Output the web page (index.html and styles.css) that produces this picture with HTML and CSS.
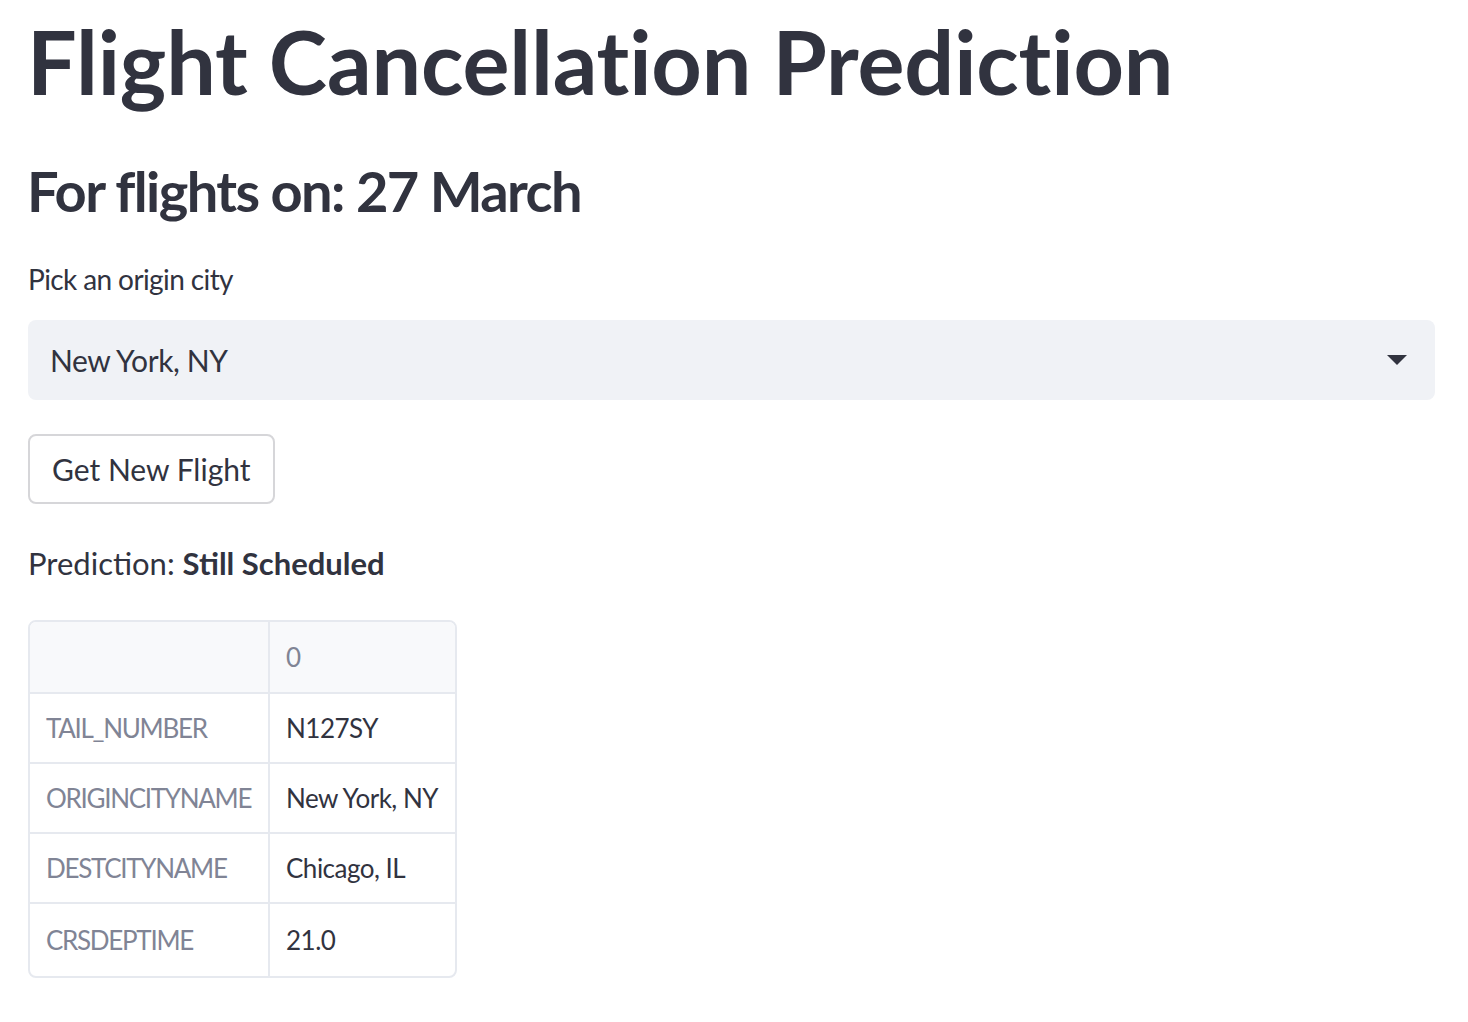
FILE: index.html
```html
<!DOCTYPE html>
<html>
<head>
<meta charset="utf-8">
<link rel="stylesheet" href="styles.css">
</head>
<body>
<main class="app">
  <h1 class="title">Flight Cancellation Prediction</h1>
  <h2 class="subtitle">For flights on: 27 March</h2>
  <label class="field-label">Pick an origin city</label>
  <div class="select">
    <span class="select-value">New York, NY</span>
    <svg class="select-arrow" width="20" height="10" viewBox="0 0 20 10"><path d="M0 0 H20 L10 10 Z" fill="#31333f"/></svg>
  </div>
  <div class="btn-row"><button class="btn">Get New Flight</button></div>
  <p class="prediction">Prediction: <strong>Still Scheduled</strong></p>
  <table class="df">
    <thead>
      <tr><th class="corner"></th><th class="colhead">0</th></tr>
    </thead>
    <tbody>
      <tr><th>TAIL_NUMBER</th><td>N127SY</td></tr>
      <tr><th>ORIGINCITYNAME</th><td>New York, NY</td></tr>
      <tr><th>DESTCITYNAME</th><td>Chicago, IL</td></tr>
      <tr><th>CRSDEPTIME</th><td>21.0</td></tr>
    </tbody>
  </table>
</main>
</body>
</html>
```
FILE: styles.css
```css
html, body {
  margin: 0;
  padding: 0;
  background: #ffffff;
}
body {
  font-family: "Lato", "Open Sans", sans-serif;
  color: #31333f;
}
.app {
  padding: 0 33px 0 28px;
  display: flex;
  flex-direction: column;
  align-items: flex-start;
}
.title {
  margin: 9px 0 0 -1px;
  font-size: 88px;
  font-weight: 700;
  line-height: 1.2;
  letter-spacing: -0.15px;
}
.subtitle {
  margin: 42px 0 0 -1px;
  font-size: 56px;
  font-weight: 700;
  line-height: 1.2;
  letter-spacing: -1.6px;
}
.field-label {
  margin-top: 36px;
  font-size: 28px;
  line-height: 1.4;
  letter-spacing: -0.6px;
}
.select {
  margin-top: 21px;
  align-self: stretch;
  height: 80px;
  background: #f0f2f6;
  border-radius: 8px;
  display: flex;
  align-items: center;
  justify-content: space-between;
  padding: 0 28px 0 22px;
  box-sizing: border-box;
}
.select-value {
  font-size: 30px;
  letter-spacing: -0.4px;
}
.select-arrow {
  display: block;
}
.btn-row {
  margin-top: 34px;
}
.btn {
  font-family: inherit;
  color: #31333f;
  font-size: 30px;
  height: 70px;
  padding: 0 22px;
  background: #ffffff;
  border: 2px solid #d6d6d9;
  border-radius: 8px;
}
.prediction {
  margin: 38px 0 0 0;
  font-size: 31px;
  line-height: 1.4;
}
.prediction strong {
  font-weight: 700;
}
.df {
  margin-top: 35px;
  width: 429px;
  table-layout: fixed;
  border-collapse: separate;
  border-spacing: 0;
  border: 2px solid #e6e9ef;
  border-radius: 8px;
  font-size: 26px;
  overflow: hidden;
}
.df th, .df td {
  height: 70px;
  box-sizing: border-box;
  padding: 0 16px;
  text-align: left;
  font-weight: 400;
  border-bottom: 2px solid #e6e9ef;
  white-space: nowrap;
}
.df tbody tr:last-child th, .df tbody tr:last-child td {
  border-bottom: none;
  height: 72px;
}
.df th {
  color: #808495;
  border-right: 2px solid #e6e9ef;
  width: 240px;
  letter-spacing: -1.3px;
}
.df td {
  color: #31333f;
  width: 185px;
  letter-spacing: -0.5px;
}
.df thead th {
  background: #f8f9fb;
  height: 72px;
}
.df thead th.colhead {
  border-right: none;
  width: 185px;
  letter-spacing: 0;
}
```
